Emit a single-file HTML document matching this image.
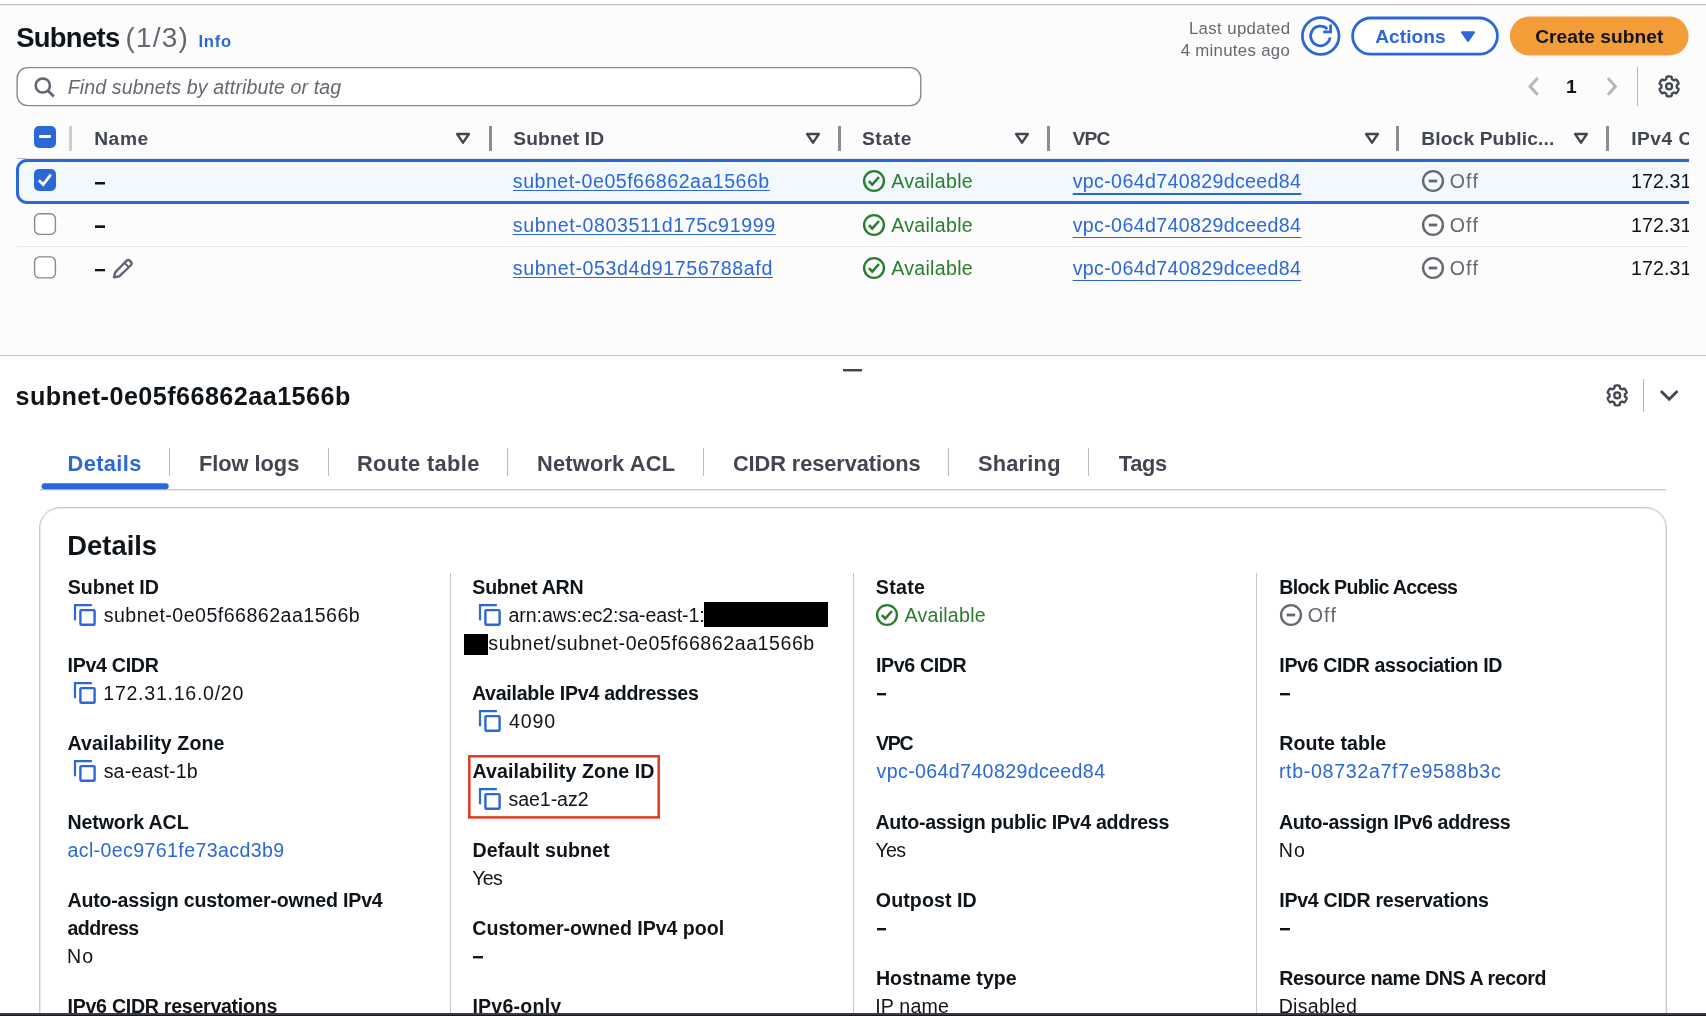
<!DOCTYPE html>
<html><head><meta charset="utf-8"><title>Subnets</title>
<style>
html,body{margin:0;padding:0;}
body{width:1706px;height:1016px;overflow:hidden;background:#fcfcfc;font-family:"Liberation Sans",sans-serif;}
#root{will-change:transform;position:relative;width:1706px;height:1016px;overflow:hidden;}
.t{position:absolute;white-space:pre;line-height:1;font-family:"Liberation Sans",sans-serif;}
.a{position:absolute;}
svg{position:absolute;overflow:visible;}

</style></head>
<body>
<div id="root">
<div class="a" style="left:0;top:0;width:1706px;height:4px;background:#fff"></div>
<div class="a" style="left:0;top:4px;width:1706px;height:1px;background:#c4c4cc"></div>
<div class="a" style="left:0;top:5px;width:1706px;height:1px;background:#ececf1"></div>
<svg style="left:1296px;top:12px" width="400" height="48" viewBox="0 0 400 48" ><circle cx="24.7" cy="24" r="18.3" fill="#fff" stroke="#2c67d8" stroke-width="2.8"/><path d="M34.1 25.4 A9.8 9.8 0 1 1 31.3 17.0" fill="none" stroke="#2c67d8" stroke-width="2.8"/><path d="M34.6 12.6 V19.9 H27.2" fill="none" stroke="#2c67d8" stroke-width="2.8"/><rect x="56.6" y="6" width="144.8" height="36.2" rx="18.1" fill="#fff" stroke="#2c67d8" stroke-width="2.8"/><path d="M165.9 20.3 H178.1 L172 29 Z" fill="#2c67d8" stroke="#2c67d8" stroke-width="2" stroke-linejoin="round"/><rect x="213.9" y="4.6" width="178.7" height="39" rx="19.5" fill="#f39c38"/></svg>
<svg style="left:10px;top:60px" width="920" height="52" viewBox="0 0 920 52" ><rect x="7.1" y="7.6" width="903.7" height="38" rx="10.5" fill="#fff" stroke="#858a93" stroke-width="1.4"/><circle cx="32.8" cy="25.5" r="7.1" fill="none" stroke="#5f6672" stroke-width="2.5"/><path d="M38 30.7 L43.8 36.5" stroke="#5f6672" stroke-width="2.7" stroke-linecap="butt"/></svg>
<svg style="left:1520px;top:70px" width="170" height="34" viewBox="0 0 170 34" ><path d="M17.7 8.1 L10 16.4 L17.7 24.8" fill="none" stroke="#b4b4bb" stroke-width="2.9"/><path d="M88 8.1 L95.4 16.4 L88 24.8" fill="none" stroke="#b4b4bb" stroke-width="2.9"/><path d="M156.76 16.40 L156.76 16.13 L156.75 15.87 L156.75 15.60 L156.79 15.32 L157.01 15.00 L157.67 14.58 L158.37 14.09 L158.58 13.68 L158.55 13.33 L158.45 13.00 L158.32 12.67 L158.19 12.35 L158.04 12.04 L157.89 11.73 L157.72 11.43 L157.54 11.13 L157.35 10.84 L157.15 10.55 L156.94 10.27 L156.72 10.01 L156.48 9.75 L156.19 9.55 L155.74 9.53 L154.96 9.89 L154.27 10.24 L153.88 10.28 L153.62 10.18 L153.39 10.04 L153.16 9.90 L152.93 9.77 L152.70 9.64 L152.46 9.51 L152.23 9.38 L152.01 9.20 L151.85 8.85 L151.81 8.07 L151.73 7.22 L151.49 6.83 L151.17 6.68 L150.83 6.60 L150.48 6.55 L150.14 6.50 L149.79 6.47 L149.45 6.46 L149.10 6.45 L148.75 6.46 L148.41 6.47 L148.06 6.50 L147.72 6.55 L147.37 6.60 L147.03 6.68 L146.71 6.83 L146.47 7.22 L146.39 8.07 L146.35 8.85 L146.19 9.20 L145.97 9.38 L145.74 9.51 L145.50 9.64 L145.27 9.77 L145.04 9.90 L144.81 10.04 L144.58 10.18 L144.32 10.28 L143.93 10.24 L143.24 9.89 L142.46 9.53 L142.01 9.55 L141.72 9.75 L141.48 10.01 L141.26 10.27 L141.05 10.55 L140.85 10.84 L140.66 11.13 L140.48 11.43 L140.31 11.73 L140.16 12.04 L140.01 12.35 L139.88 12.67 L139.75 13.00 L139.65 13.33 L139.62 13.68 L139.83 14.09 L140.53 14.58 L141.19 15.00 L141.41 15.32 L141.45 15.60 L141.45 15.87 L141.44 16.13 L141.44 16.40 L141.44 16.67 L141.45 16.93 L141.45 17.20 L141.41 17.48 L141.19 17.80 L140.53 18.22 L139.83 18.71 L139.62 19.12 L139.65 19.47 L139.75 19.80 L139.88 20.13 L140.01 20.45 L140.16 20.76 L140.31 21.07 L140.48 21.37 L140.66 21.67 L140.85 21.96 L141.05 22.25 L141.26 22.53 L141.48 22.79 L141.72 23.05 L142.01 23.25 L142.46 23.27 L143.24 22.91 L143.93 22.56 L144.32 22.52 L144.58 22.62 L144.81 22.76 L145.04 22.90 L145.27 23.03 L145.50 23.16 L145.74 23.29 L145.97 23.42 L146.19 23.60 L146.35 23.95 L146.39 24.73 L146.47 25.58 L146.71 25.97 L147.03 26.12 L147.37 26.20 L147.72 26.25 L148.06 26.30 L148.41 26.33 L148.75 26.34 L149.10 26.35 L149.45 26.34 L149.79 26.33 L150.14 26.30 L150.48 26.25 L150.83 26.20 L151.17 26.12 L151.49 25.97 L151.73 25.58 L151.81 24.73 L151.85 23.95 L152.01 23.60 L152.23 23.42 L152.46 23.29 L152.70 23.16 L152.93 23.03 L153.16 22.90 L153.39 22.76 L153.62 22.62 L153.88 22.52 L154.27 22.56 L154.96 22.91 L155.74 23.27 L156.19 23.25 L156.48 23.05 L156.72 22.79 L156.94 22.53 L157.15 22.25 L157.35 21.96 L157.54 21.67 L157.72 21.37 L157.89 21.07 L158.04 20.76 L158.19 20.45 L158.32 20.13 L158.45 19.80 L158.55 19.47 L158.58 19.12 L158.37 18.71 L157.67 18.22 L157.01 17.80 L156.79 17.48 L156.75 17.20 L156.75 16.93 L156.76 16.67 Z" fill="none" stroke="#424650" stroke-width="2.3" stroke-linejoin="round"/><circle cx="149.1" cy="16.4" r="2.95" fill="none" stroke="#424650" stroke-width="2.3"/></svg>
<div class="a" style="left:1637px;top:67px;width:1px;height:39px;background:#b4b4bb"></div>
<div class="a" style="left:34px;top:126px;width:22px;height:22px;border-radius:5px;background:#2c67d8"></div>
<div class="a" style="left:39px;top:135px;width:12px;height:3px;border-radius:1px;background:#fff"></div>
<div class="a" style="left:69px;top:126px;width:3px;height:25px;background:#cdcdd4"></div>
<div class="a" style="left:489px;top:126px;width:3px;height:25px;background:#8c8c94"></div>
<div class="a" style="left:838px;top:126px;width:3px;height:25px;background:#8c8c94"></div>
<div class="a" style="left:1047px;top:126px;width:3px;height:25px;background:#8c8c94"></div>
<div class="a" style="left:1396px;top:126px;width:3px;height:25px;background:#8c8c94"></div>
<div class="a" style="left:1606px;top:126px;width:3px;height:25px;background:#8c8c94"></div>
<svg style="left:454px;top:130px" width="18" height="16" viewBox="0 0 18 16" ><path d="M3.2 4.1 H14.8 L9 12.6 Z" fill="none" stroke="#424650" stroke-width="2.5" stroke-linejoin="round"/></svg>
<svg style="left:804px;top:130px" width="18" height="16" viewBox="0 0 18 16" ><path d="M3.2 4.1 H14.8 L9 12.6 Z" fill="none" stroke="#424650" stroke-width="2.5" stroke-linejoin="round"/></svg>
<svg style="left:1013px;top:130px" width="18" height="16" viewBox="0 0 18 16" ><path d="M3.2 4.1 H14.8 L9 12.6 Z" fill="none" stroke="#424650" stroke-width="2.5" stroke-linejoin="round"/></svg>
<svg style="left:1363px;top:130px" width="18" height="16" viewBox="0 0 18 16" ><path d="M3.2 4.1 H14.8 L9 12.6 Z" fill="none" stroke="#424650" stroke-width="2.5" stroke-linejoin="round"/></svg>
<svg style="left:1572px;top:130px" width="18" height="16" viewBox="0 0 18 16" ><path d="M3.2 4.1 H14.8 L9 12.6 Z" fill="none" stroke="#424650" stroke-width="2.5" stroke-linejoin="round"/></svg>
<div class="a" style="left:17px;top:158px;width:1672px;height:1px;background:#ebe5e0"></div>
<div class="a" style="left:17px;top:158px;width:9px;height:1px;background:#bdbdc5"></div>
<div class="a" style="left:16px;top:159px;width:1700px;height:39px;border:3px solid #2c67d8;border-radius:11px;background:#f1f8fe"></div>
<div class="a" style="left:17px;top:246px;width:1680px;height:1px;background:#e6e6ed"></div>
<div class="a" style="left:34px;top:169px;width:22px;height:22px;border-radius:5px;background:#2c67d8"></div>
<svg style="left:34px;top:169px" width="22" height="22" viewBox="0 0 22 22" ><path d="M4.9 11.2 L9.2 15.6 L16.8 5.7" fill="none" stroke="#fff" stroke-width="2.8"/></svg>
<svg style="left:30px;top:209px" width="30" height="74" viewBox="0 0 30 74" ><rect x="4.6" y="4.8" width="20.8" height="20.6" rx="5" fill="#fff" stroke="#858993" stroke-width="1.4"/><rect x="4.6" y="47.9" width="20.8" height="21" rx="5" fill="#fff" stroke="#858993" stroke-width="1.4"/></svg>
<div class="a" style="left:95px;top:182px;width:9.5px;height:1px;background:#0f141a;opacity:1"></div>
<div class="a" style="left:95px;top:183px;width:9.5px;height:1px;background:#0f141a;opacity:1"></div>
<div class="a" style="left:95px;top:184px;width:9.5px;height:1px;background:#0f141a;opacity:0.5"></div>
<div class="a" style="left:95px;top:225px;width:9.5px;height:1px;background:#0f141a;opacity:0.7"></div>
<div class="a" style="left:95px;top:226px;width:9.5px;height:1px;background:#0f141a;opacity:1"></div>
<div class="a" style="left:95px;top:227px;width:9.5px;height:1px;background:#0f141a;opacity:1"></div>
<div class="a" style="left:95px;top:269px;width:9.5px;height:1px;background:#0f141a;opacity:1"></div>
<div class="a" style="left:95px;top:270px;width:9.5px;height:1px;background:#0f141a;opacity:1"></div>
<div class="a" style="left:95px;top:271px;width:9.5px;height:1px;background:#0f141a;opacity:0.3"></div>
<svg style="left:112px;top:256.5px" width="22" height="22" viewBox="0 0 22 22" ><path d="M2 20.3 L3.2 15.3 L14.2 4.1 a2.9 2.9 0 0 1 4.1 0 l0.3 0.3 a2.9 2.9 0 0 1 0 4.1 L7.2 19.4 Z" fill="none" stroke="#5f6672" stroke-width="2.4" stroke-linejoin="round"/><path d="M12.6 6 L16.4 9.8" stroke="#5f6672" stroke-width="2"/></svg>
<svg style="left:862.1px;top:169.4px" width="24" height="24" viewBox="0 0 24 24" ><circle cx="12" cy="12" r="9.9" fill="none" stroke="#2a7d2e" stroke-width="2.4"/><path d="M6.9 12.2 L10.2 15.5 L17 8" fill="none" stroke="#2a7d2e" stroke-width="2.6"/></svg>
<svg style="left:1420.9px;top:169.4px" width="24" height="24" viewBox="0 0 24 24" ><circle cx="12" cy="12" r="9.9" fill="none" stroke="#656871" stroke-width="2.4"/><path d="M7.7 12 H16.2" stroke="#656871" stroke-width="2.8"/></svg>
<svg style="left:862.1px;top:212.8px" width="24" height="24" viewBox="0 0 24 24" ><circle cx="12" cy="12" r="9.9" fill="none" stroke="#2a7d2e" stroke-width="2.4"/><path d="M6.9 12.2 L10.2 15.5 L17 8" fill="none" stroke="#2a7d2e" stroke-width="2.6"/></svg>
<svg style="left:1420.9px;top:212.8px" width="24" height="24" viewBox="0 0 24 24" ><circle cx="12" cy="12" r="9.9" fill="none" stroke="#656871" stroke-width="2.4"/><path d="M7.7 12 H16.2" stroke="#656871" stroke-width="2.8"/></svg>
<svg style="left:862.1px;top:255.8px" width="24" height="24" viewBox="0 0 24 24" ><circle cx="12" cy="12" r="9.9" fill="none" stroke="#2a7d2e" stroke-width="2.4"/><path d="M6.9 12.2 L10.2 15.5 L17 8" fill="none" stroke="#2a7d2e" stroke-width="2.6"/></svg>
<svg style="left:1420.9px;top:255.8px" width="24" height="24" viewBox="0 0 24 24" ><circle cx="12" cy="12" r="9.9" fill="none" stroke="#656871" stroke-width="2.4"/><path d="M7.7 12 H16.2" stroke="#656871" stroke-width="2.8"/></svg>
<div class="a" style="left:1689px;top:110px;width:17px;height:200px;background:#fcfcfc;z-index:5"></div>
<div class="a" style="left:0;top:355px;width:1706px;height:661px;background:#fff;border-top:1px solid #c6c6cd"></div>
<div class="a" style="left:843px;top:369px;width:19px;height:2px;background:#424650"></div>
<div class="a" style="left:843px;top:371px;width:19px;height:1px;background:#424650;opacity:.45"></div>
<svg style="left:1600px;top:378px" width="90" height="36" viewBox="0 0 90 36" ><path d="M24.86 17.40 L24.86 17.13 L24.85 16.87 L24.85 16.60 L24.89 16.32 L25.11 16.00 L25.77 15.58 L26.47 15.09 L26.68 14.68 L26.65 14.33 L26.55 14.00 L26.42 13.67 L26.29 13.35 L26.14 13.04 L25.99 12.73 L25.82 12.43 L25.64 12.13 L25.45 11.84 L25.25 11.55 L25.04 11.27 L24.82 11.01 L24.58 10.75 L24.29 10.55 L23.84 10.53 L23.06 10.89 L22.37 11.24 L21.98 11.28 L21.72 11.18 L21.49 11.04 L21.26 10.90 L21.03 10.77 L20.80 10.64 L20.56 10.51 L20.33 10.38 L20.11 10.20 L19.95 9.85 L19.91 9.07 L19.83 8.22 L19.59 7.83 L19.27 7.68 L18.93 7.60 L18.58 7.55 L18.24 7.50 L17.89 7.47 L17.55 7.46 L17.20 7.45 L16.85 7.46 L16.51 7.47 L16.16 7.50 L15.82 7.55 L15.47 7.60 L15.13 7.68 L14.81 7.83 L14.57 8.22 L14.49 9.07 L14.45 9.85 L14.29 10.20 L14.07 10.38 L13.84 10.51 L13.60 10.64 L13.37 10.77 L13.14 10.90 L12.91 11.04 L12.68 11.18 L12.42 11.28 L12.03 11.24 L11.34 10.89 L10.56 10.53 L10.11 10.55 L9.82 10.75 L9.58 11.01 L9.36 11.27 L9.15 11.55 L8.95 11.84 L8.76 12.13 L8.58 12.43 L8.41 12.73 L8.26 13.04 L8.11 13.35 L7.98 13.67 L7.85 14.00 L7.75 14.33 L7.72 14.68 L7.93 15.09 L8.63 15.58 L9.29 16.00 L9.51 16.32 L9.55 16.60 L9.55 16.87 L9.54 17.13 L9.54 17.40 L9.54 17.67 L9.55 17.93 L9.55 18.20 L9.51 18.48 L9.29 18.80 L8.63 19.22 L7.93 19.71 L7.72 20.12 L7.75 20.47 L7.85 20.80 L7.98 21.13 L8.11 21.45 L8.26 21.76 L8.41 22.07 L8.58 22.37 L8.76 22.67 L8.95 22.96 L9.15 23.25 L9.36 23.53 L9.58 23.79 L9.82 24.05 L10.11 24.25 L10.56 24.27 L11.34 23.91 L12.03 23.56 L12.42 23.52 L12.68 23.62 L12.91 23.76 L13.14 23.90 L13.37 24.03 L13.60 24.16 L13.84 24.29 L14.07 24.42 L14.29 24.60 L14.45 24.95 L14.49 25.73 L14.57 26.58 L14.81 26.97 L15.13 27.12 L15.47 27.20 L15.82 27.25 L16.16 27.30 L16.51 27.33 L16.85 27.34 L17.20 27.35 L17.55 27.34 L17.89 27.33 L18.24 27.30 L18.58 27.25 L18.93 27.20 L19.27 27.12 L19.59 26.97 L19.83 26.58 L19.91 25.73 L19.95 24.95 L20.11 24.60 L20.33 24.42 L20.56 24.29 L20.80 24.16 L21.03 24.03 L21.26 23.90 L21.49 23.76 L21.72 23.62 L21.98 23.52 L22.37 23.56 L23.06 23.91 L23.84 24.27 L24.29 24.25 L24.58 24.05 L24.82 23.79 L25.04 23.53 L25.25 23.25 L25.45 22.96 L25.64 22.67 L25.82 22.37 L25.99 22.07 L26.14 21.76 L26.29 21.45 L26.42 21.13 L26.55 20.80 L26.65 20.47 L26.68 20.12 L26.47 19.71 L25.77 19.22 L25.11 18.80 L24.89 18.48 L24.85 18.20 L24.85 17.93 L24.86 17.67 Z" fill="none" stroke="#424650" stroke-width="2.3" stroke-linejoin="round"/><circle cx="17.2" cy="17.4" r="2.95" fill="none" stroke="#424650" stroke-width="2.3"/><path d="M60.9 12.9 L69.2 21.2 L77.5 12.9" fill="none" stroke="#424650" stroke-width="2.8"/></svg>
<div class="a" style="left:1643px;top:379px;width:1px;height:33px;background:#b4b4bb"></div>
<div class="a" style="left:40px;top:489px;width:1626px;height:1px;background:#c6c6cd"></div>
<div class="a" style="left:40px;top:490px;width:1626px;height:1px;background:#ececf0"></div>
<svg style="left:41px;top:483px" width="130" height="7" viewBox="0 0 130 7" ><rect x="0.6" y="0.3" width="127.1" height="5.9" rx="2.9" fill="#2c67d8"/></svg>
<div class="a" style="left:169px;top:448px;width:1px;height:28px;background:#bcbcc4"></div>
<div class="a" style="left:328px;top:448px;width:1px;height:28px;background:#bcbcc4"></div>
<div class="a" style="left:507px;top:448px;width:1px;height:28px;background:#bcbcc4"></div>
<div class="a" style="left:703px;top:448px;width:1px;height:28px;background:#bcbcc4"></div>
<div class="a" style="left:948px;top:448px;width:1px;height:28px;background:#bcbcc4"></div>
<div class="a" style="left:1088px;top:448px;width:1px;height:28px;background:#bcbcc4"></div>
<div class="a" style="left:39px;top:507px;width:1626px;height:560px;border:1px solid #c8c8cf;border-radius:21px;background:#fff;box-shadow:inset 0 0 0 1px rgba(200,200,208,.4)"></div>
<div class="a" style="left:450px;top:573px;width:1px;height:460px;background:#c6c6cd"></div>
<div class="a" style="left:853px;top:573px;width:1px;height:460px;background:#c6c6cd"></div>
<div class="a" style="left:1256px;top:573px;width:1px;height:460px;background:#c6c6cd"></div>
<svg style="left:73px;top:604px" width="24" height="24" viewBox="0 0 24 24" ><path d="M2 16.2 V1.1 H18.9" fill="none" stroke="#2c67d8" stroke-width="2.2"/><rect x="7.4" y="6.1" width="14.2" height="14.7" rx="1" fill="none" stroke="#2c67d8" stroke-width="2.4"/></svg>
<svg style="left:73px;top:682.2px" width="24" height="24" viewBox="0 0 24 24" ><path d="M2 16.2 V1.1 H18.9" fill="none" stroke="#2c67d8" stroke-width="2.2"/><rect x="7.4" y="6.1" width="14.2" height="14.7" rx="1" fill="none" stroke="#2c67d8" stroke-width="2.4"/></svg>
<svg style="left:73px;top:760.4px" width="24" height="24" viewBox="0 0 24 24" ><path d="M2 16.2 V1.1 H18.9" fill="none" stroke="#2c67d8" stroke-width="2.2"/><rect x="7.4" y="6.1" width="14.2" height="14.7" rx="1" fill="none" stroke="#2c67d8" stroke-width="2.4"/></svg>
<svg style="left:478px;top:604px" width="24" height="24" viewBox="0 0 24 24" ><path d="M2 16.2 V1.1 H18.9" fill="none" stroke="#2c67d8" stroke-width="2.2"/><rect x="7.4" y="6.1" width="14.2" height="14.7" rx="1" fill="none" stroke="#2c67d8" stroke-width="2.4"/></svg>
<svg style="left:478px;top:710.2px" width="24" height="24" viewBox="0 0 24 24" ><path d="M2 16.2 V1.1 H18.9" fill="none" stroke="#2c67d8" stroke-width="2.2"/><rect x="7.4" y="6.1" width="14.2" height="14.7" rx="1" fill="none" stroke="#2c67d8" stroke-width="2.4"/></svg>
<svg style="left:478px;top:788.4px" width="24" height="24" viewBox="0 0 24 24" ><path d="M2 16.2 V1.1 H18.9" fill="none" stroke="#2c67d8" stroke-width="2.2"/><rect x="7.4" y="6.1" width="14.2" height="14.7" rx="1" fill="none" stroke="#2c67d8" stroke-width="2.4"/></svg>
<div class="a" style="left:704px;top:602px;width:124px;height:25px;background:#000"></div>
<div class="a" style="left:464px;top:634px;width:24px;height:21px;background:#000"></div>
<svg style="left:460px;top:750px" width="210" height="76" viewBox="0 0 210 76" ><rect x="9.3" y="6.3" width="189.4" height="61.1" fill="none" stroke="#e0391f" stroke-width="2.5"/></svg>
<svg style="left:875.3px;top:603.4px" width="24" height="24" viewBox="0 0 24 24" ><circle cx="12" cy="12" r="9.9" fill="none" stroke="#2a7d2e" stroke-width="2.4"/><path d="M6.9 12.2 L10.2 15.5 L17 8" fill="none" stroke="#2a7d2e" stroke-width="2.6"/></svg>
<svg style="left:1278.9px;top:603.4px" width="24" height="24" viewBox="0 0 24 24" ><circle cx="12" cy="12" r="9.9" fill="none" stroke="#656871" stroke-width="2.4"/><path d="M7.7 12 H16.2" stroke="#656871" stroke-width="2.8"/></svg>
<div class="a" style="left:473px;top:956px;width:9.5px;height:2px;background:#0f141a"></div>
<div class="a" style="left:473px;top:958px;width:9.5px;height:1px;background:#0f141a;opacity:.4"></div>
<div class="a" style="left:876.5px;top:693px;width:9.5px;height:2px;background:#0f141a"></div>
<div class="a" style="left:876.5px;top:695px;width:9.5px;height:1px;background:#0f141a;opacity:.4"></div>
<div class="a" style="left:876.5px;top:928px;width:9.5px;height:2px;background:#0f141a"></div>
<div class="a" style="left:876.5px;top:930px;width:9.5px;height:1px;background:#0f141a;opacity:.4"></div>
<div class="a" style="left:1280px;top:693px;width:9.5px;height:2px;background:#0f141a"></div>
<div class="a" style="left:1280px;top:695px;width:9.5px;height:1px;background:#0f141a;opacity:.4"></div>
<div class="a" style="left:1280px;top:928px;width:9.5px;height:2px;background:#0f141a"></div>
<div class="a" style="left:1280px;top:930px;width:9.5px;height:1px;background:#0f141a;opacity:.4"></div>
<div class="a" style="left:0;top:1013px;width:1706px;height:2px;background:#383a46;z-index:9"></div>
<div class="a" style="left:0;top:1015px;width:1706px;height:1px;background:#131a22;z-index:9"></div>
<span class="t" style="left:16.14px;top:24px;font-size:27.4px;font-weight:700;color:#0f141a;letter-spacing:-0.664px;">Subnets</span>
<span class="t" style="left:125.46px;top:24px;font-size:28px;color:#656871;letter-spacing:1.200px;">(1/3)</span>
<span class="t" style="left:198.39px;top:34px;font-size:16.6px;font-weight:700;color:#2c67d8;letter-spacing:0.784px;">Info</span>
<span class="t" style="left:1188.88px;top:21px;font-size:16.8px;color:#656871;letter-spacing:0.382px;">Last updated</span>
<span class="t" style="left:1180.66px;top:43px;font-size:16.8px;color:#656871;letter-spacing:0.306px;">4 minutes ago</span>
<span class="t" style="left:1375.17px;top:27px;font-size:19.2px;font-weight:700;color:#2c67d8;letter-spacing:0.031px;">Actions</span>
<span class="t" style="left:1535.15px;top:27px;font-size:19.2px;font-weight:700;color:#0f141a;letter-spacing:0.020px;">Create subnet</span>
<span class="t" style="left:67.77px;top:78px;font-size:19.6px;color:#656871;letter-spacing:0.109px;font-style:italic;">Find subnets by attribute or tag</span>
<span class="t" style="left:1565.91px;top:77px;font-size:19.2px;font-weight:700;color:#0f141a;">1</span>
<span class="t" style="left:94.15px;top:129px;font-size:19.2px;font-weight:700;color:#424650;letter-spacing:0.604px;">Name</span>
<span class="t" style="left:513.18px;top:129px;font-size:19.2px;font-weight:700;color:#424650;letter-spacing:0.190px;">Subnet ID</span>
<span class="t" style="left:861.88px;top:129px;font-size:19.2px;font-weight:700;color:#424650;letter-spacing:0.658px;">State</span>
<span class="t" style="left:1072.62px;top:129px;font-size:19.2px;font-weight:700;color:#424650;letter-spacing:-0.879px;">VPC</span>
<span class="t" style="left:1421.25px;top:129px;font-size:19.2px;font-weight:700;color:#424650;letter-spacing:0.139px;">Block Public...</span>
<span class="t" style="left:1631.25px;top:129px;font-size:19.2px;font-weight:700;color:#424650;letter-spacing:0.488px;">IPv4 C</span>
<span class="t" style="left:512.85px;top:172px;font-size:19.6px;color:#2c67d8;letter-spacing:0.488px;text-decoration:underline;text-decoration-thickness:1px;text-underline-offset:2px;">subnet-0e05f66862aa1566b</span>
<span class="t" style="left:891.18px;top:172px;font-size:19.6px;color:#2a7d2e;letter-spacing:0.292px;">Available</span>
<span class="t" style="left:1072.68px;top:172px;font-size:19.6px;color:#2c67d8;letter-spacing:0.359px;text-decoration:underline;text-decoration-thickness:2px;text-underline-offset:5px;">vpc-064d740829dceed84</span>
<span class="t" style="left:1449.68px;top:172px;font-size:19.6px;color:#656871;letter-spacing:1.200px;">Off</span>
<span class="t" style="left:1631.07px;top:172px;font-size:19.6px;color:#0f141a;letter-spacing:0.069px;">172.31</span>
<span class="t" style="left:512.85px;top:216px;font-size:19.6px;color:#2c67d8;letter-spacing:0.616px;text-decoration:underline;text-decoration-thickness:1px;text-underline-offset:2px;">subnet-0803511d175c91999</span>
<span class="t" style="left:891.18px;top:216px;font-size:19.6px;color:#2a7d2e;letter-spacing:0.292px;">Available</span>
<span class="t" style="left:1072.68px;top:216px;font-size:19.6px;color:#2c67d8;letter-spacing:0.359px;text-decoration:underline;text-decoration-thickness:1px;text-underline-offset:5px;">vpc-064d740829dceed84</span>
<span class="t" style="left:1449.68px;top:216px;font-size:19.6px;color:#656871;letter-spacing:1.200px;">Off</span>
<span class="t" style="left:1631.07px;top:216px;font-size:19.6px;color:#0f141a;letter-spacing:0.069px;">172.31</span>
<span class="t" style="left:512.85px;top:259px;font-size:19.6px;color:#2c67d8;letter-spacing:0.621px;text-decoration:underline;text-decoration-thickness:1px;text-underline-offset:2px;">subnet-053d4d91756788afd</span>
<span class="t" style="left:891.18px;top:259px;font-size:19.6px;color:#2a7d2e;letter-spacing:0.292px;">Available</span>
<span class="t" style="left:1072.68px;top:259px;font-size:19.6px;color:#2c67d8;letter-spacing:0.359px;text-decoration:underline;text-decoration-thickness:1px;text-underline-offset:5px;">vpc-064d740829dceed84</span>
<span class="t" style="left:1449.68px;top:259px;font-size:19.6px;color:#656871;letter-spacing:1.200px;">Off</span>
<span class="t" style="left:1631.07px;top:259px;font-size:19.6px;color:#0f141a;letter-spacing:0.069px;">172.31</span>
<span class="t" style="left:15.46px;top:384px;font-size:25.2px;font-weight:700;color:#0f141a;letter-spacing:0.435px;">subnet-0e05f66862aa1566b</span>
<span class="t" style="left:67.60px;top:453px;font-size:21.8px;font-weight:700;color:#2c67d8;letter-spacing:0.377px;">Details</span>
<span class="t" style="left:199.00px;top:453px;font-size:21.8px;font-weight:700;color:#424650;letter-spacing:-0.031px;">Flow logs</span>
<span class="t" style="left:357.00px;top:453px;font-size:21.8px;font-weight:700;color:#424650;letter-spacing:0.365px;">Route table</span>
<span class="t" style="left:537.00px;top:453px;font-size:21.8px;font-weight:700;color:#424650;letter-spacing:0.202px;">Network ACL</span>
<span class="t" style="left:732.91px;top:453px;font-size:21.8px;font-weight:700;color:#424650;letter-spacing:-0.082px;">CIDR reservations</span>
<span class="t" style="left:977.95px;top:453px;font-size:21.8px;font-weight:700;color:#424650;letter-spacing:0.231px;">Sharing</span>
<span class="t" style="left:1118.68px;top:453px;font-size:21.8px;font-weight:700;color:#424650;letter-spacing:-0.239px;">Tags</span>
<span class="t" style="left:67.35px;top:532px;font-size:27.4px;font-weight:700;color:#0f141a;letter-spacing:-0.015px;">Details</span>
<span class="t" style="left:67.83px;top:578px;font-size:19.6px;font-weight:700;color:#0f141a;letter-spacing:-0.055px;">Subnet ID</span>
<span class="t" style="left:103.65px;top:606px;font-size:19.6px;color:#0f141a;letter-spacing:0.475px;">subnet-0e05f66862aa1566b</span>
<span class="t" style="left:67.52px;top:656px;font-size:19.6px;font-weight:700;color:#0f141a;letter-spacing:-0.298px;">IPv4 CIDR</span>
<span class="t" style="left:103.27px;top:684px;font-size:19.6px;color:#0f141a;letter-spacing:0.721px;">172.31.16.0/20</span>
<span class="t" style="left:67.48px;top:734px;font-size:19.6px;font-weight:700;color:#0f141a;letter-spacing:0.127px;">Availability Zone</span>
<span class="t" style="left:103.65px;top:762px;font-size:19.6px;color:#0f141a;letter-spacing:0.167px;">sa-east-1b</span>
<span class="t" style="left:67.54px;top:813px;font-size:19.6px;font-weight:700;color:#0f141a;letter-spacing:-0.121px;">Network ACL</span>
<span class="t" style="left:67.45px;top:841px;font-size:19.6px;color:#2c67d8;letter-spacing:0.379px;">acl-0ec9761fe73acd3b9</span>
<span class="t" style="left:67.48px;top:891px;font-size:19.6px;font-weight:700;color:#0f141a;letter-spacing:-0.197px;">Auto-assign customer-owned IPv4</span>
<span class="t" style="left:67.49px;top:919px;font-size:19.6px;font-weight:700;color:#0f141a;letter-spacing:-0.564px;">address</span>
<span class="t" style="left:66.89px;top:947px;font-size:19.6px;color:#0f141a;letter-spacing:1.200px;">No</span>
<span class="t" style="left:67.52px;top:997px;font-size:19.6px;font-weight:700;color:#0f141a;letter-spacing:-0.278px;">IPv6 CIDR reservations</span>
<span class="t" style="left:472.33px;top:578px;font-size:19.6px;font-weight:700;color:#0f141a;letter-spacing:-0.250px;">Subnet ARN</span>
<span class="t" style="left:508.55px;top:606px;font-size:19.6px;color:#0f141a;letter-spacing:-0.097px;">arn:aws:ec2:sa-east-1:</span>
<span class="t" style="left:488.35px;top:634px;font-size:19.6px;color:#0f141a;letter-spacing:0.550px;">subnet/subnet-0e05f66862aa1566b</span>
<span class="t" style="left:471.98px;top:684px;font-size:19.6px;font-weight:700;color:#0f141a;letter-spacing:-0.288px;">Available IPv4 addresses</span>
<span class="t" style="left:509.10px;top:712px;font-size:19.6px;color:#0f141a;letter-spacing:0.846px;">4090</span>
<span class="t" style="left:472.38px;top:762px;font-size:19.6px;font-weight:700;color:#0f141a;letter-spacing:0.110px;">Availability Zone ID</span>
<span class="t" style="left:508.45px;top:790px;font-size:19.6px;color:#0f141a;letter-spacing:-0.068px;">sae1-az2</span>
<span class="t" style="left:472.44px;top:841px;font-size:19.6px;font-weight:700;color:#0f141a;letter-spacing:0.080px;">Default subnet</span>
<span class="t" style="left:472.35px;top:869px;font-size:19.6px;color:#0f141a;letter-spacing:-0.773px;">Yes</span>
<span class="t" style="left:472.35px;top:919px;font-size:19.6px;font-weight:700;color:#0f141a;letter-spacing:-0.035px;">Customer-owned IPv4 pool</span>
<span class="t" style="left:472.42px;top:997px;font-size:19.6px;font-weight:700;color:#0f141a;letter-spacing:0.215px;">IPv6-only</span>
<span class="t" style="left:875.83px;top:578px;font-size:19.6px;font-weight:700;color:#0f141a;letter-spacing:0.297px;">State</span>
<span class="t" style="left:904.48px;top:606px;font-size:19.6px;color:#2a7d2e;letter-spacing:0.254px;">Available</span>
<span class="t" style="left:875.92px;top:656px;font-size:19.6px;font-weight:700;color:#0f141a;letter-spacing:-0.348px;">IPv6 CIDR</span>
<span class="t" style="left:876.12px;top:734px;font-size:19.6px;font-weight:700;color:#0f141a;letter-spacing:-1.379px;">VPC</span>
<span class="t" style="left:876.58px;top:762px;font-size:19.6px;color:#2c67d8;letter-spacing:0.364px;">vpc-064d740829dceed84</span>
<span class="t" style="left:875.48px;top:813px;font-size:19.6px;font-weight:700;color:#0f141a;letter-spacing:-0.293px;">Auto-assign public IPv4 address</span>
<span class="t" style="left:875.45px;top:841px;font-size:19.6px;color:#0f141a;letter-spacing:-0.673px;">Yes</span>
<span class="t" style="left:875.85px;top:891px;font-size:19.6px;font-weight:700;color:#0f141a;letter-spacing:0.085px;">Outpost ID</span>
<span class="t" style="left:875.94px;top:969px;font-size:19.6px;font-weight:700;color:#0f141a;letter-spacing:0.026px;">Hostname type</span>
<span class="t" style="left:875.25px;top:997px;font-size:19.6px;color:#0f141a;letter-spacing:0.161px;">IP name</span>
<span class="t" style="left:1279.34px;top:578px;font-size:19.6px;font-weight:700;color:#0f141a;letter-spacing:-0.682px;">Block Public Access</span>
<span class="t" style="left:1307.68px;top:606px;font-size:19.6px;color:#656871;letter-spacing:1.200px;">Off</span>
<span class="t" style="left:1279.32px;top:656px;font-size:19.6px;font-weight:700;color:#0f141a;letter-spacing:-0.381px;">IPv6 CIDR association ID</span>
<span class="t" style="left:1279.34px;top:734px;font-size:19.6px;font-weight:700;color:#0f141a;letter-spacing:0.025px;">Route table</span>
<span class="t" style="left:1278.92px;top:762px;font-size:19.6px;color:#2c67d8;letter-spacing:0.685px;">rtb-08732a7f7e9588b3c</span>
<span class="t" style="left:1278.98px;top:813px;font-size:19.6px;font-weight:700;color:#0f141a;letter-spacing:-0.339px;">Auto-assign IPv6 address</span>
<span class="t" style="left:1278.69px;top:841px;font-size:19.6px;color:#0f141a;letter-spacing:1.200px;">No</span>
<span class="t" style="left:1279.32px;top:891px;font-size:19.6px;font-weight:700;color:#0f141a;letter-spacing:-0.292px;">IPv4 CIDR reservations</span>
<span class="t" style="left:1279.34px;top:969px;font-size:19.6px;font-weight:700;color:#0f141a;letter-spacing:-0.409px;">Resource name DNS A record</span>
<span class="t" style="left:1278.69px;top:997px;font-size:19.6px;color:#0f141a;letter-spacing:0.278px;">Disabled</span>
</div>
</body></html>
